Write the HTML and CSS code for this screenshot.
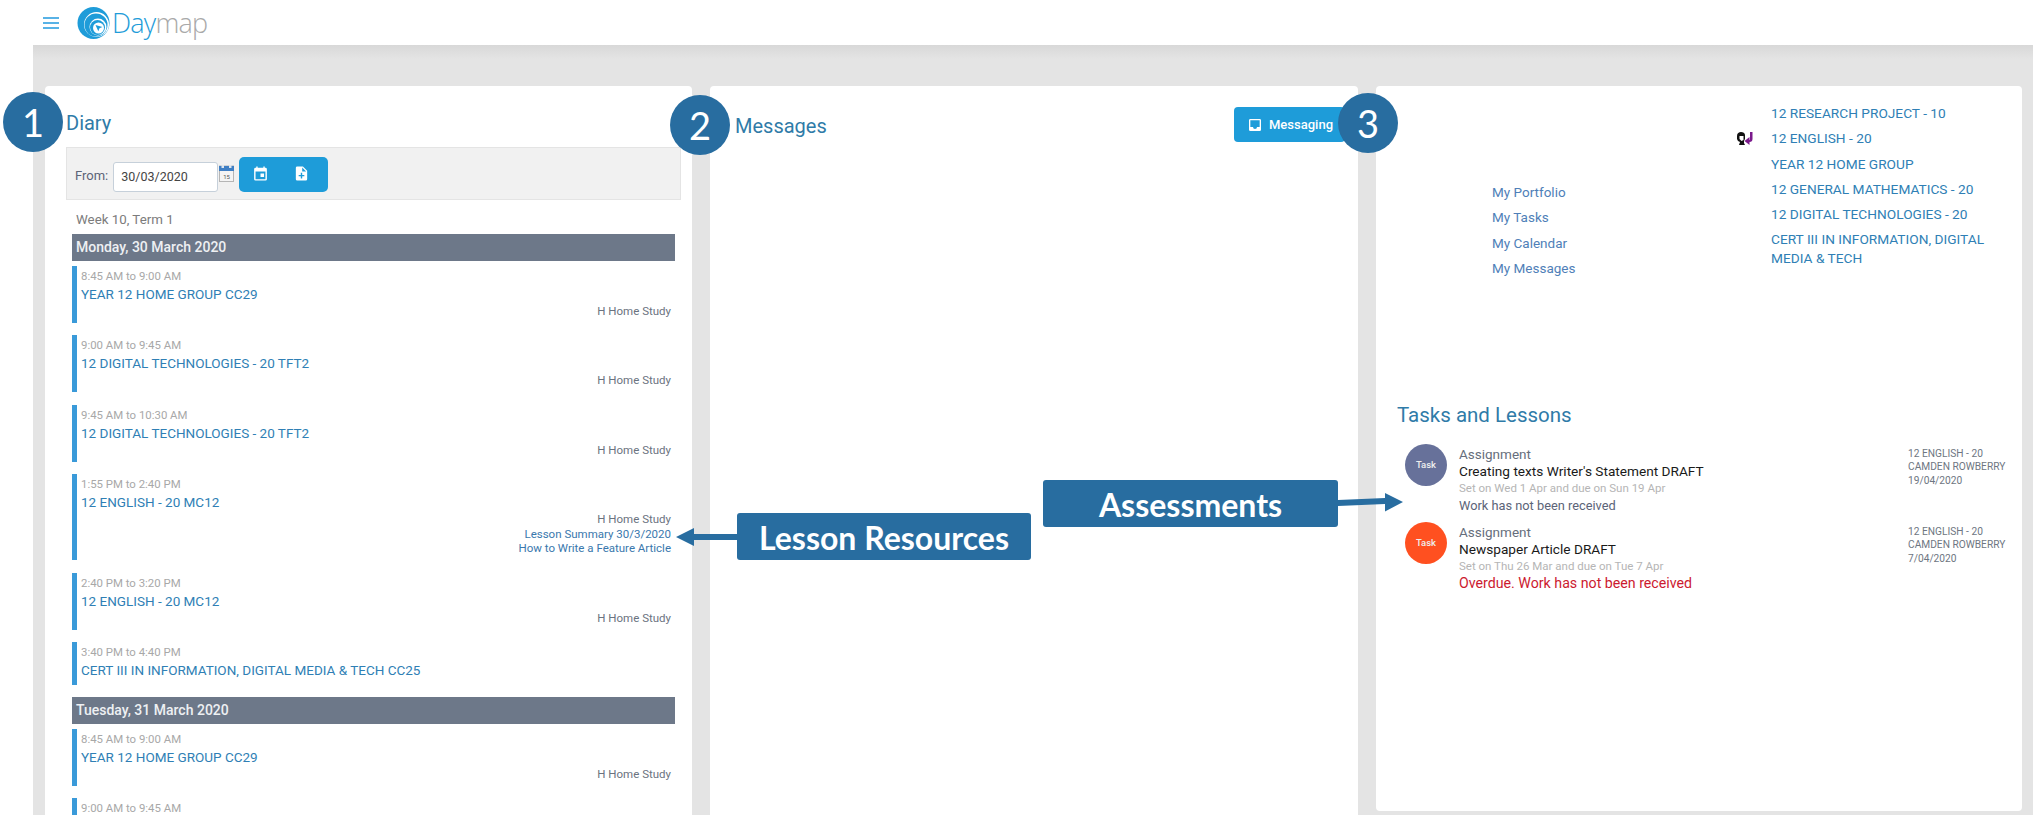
FILE: index.html
```html
<!DOCTYPE html>
<html lang="en">
<head>
  <meta charset="UTF-8" />
  <title>Daymap</title>
  <link rel="stylesheet" href="styles.css">
</head>
<body>
  <header class="topbar">
    <div class="menu-icon"><span></span><span></span><span></span></div>
    <svg class="logo-mark" viewBox="0 0 33 34">
      <circle cx="16.500" cy="17" r="16" fill="#1e9cd9"/>
      <circle cx="19.500" cy="18.500" r="12.500" fill="#fff"/>
      <circle cx="19" cy="19" r="11.500" fill="#1e9cd9"/>
      <circle cx="21" cy="21" r="8.500" fill="#fff"/>
      <circle cx="20.500" cy="21.500" r="7.500" fill="#1e9cd9"/>
      <circle cx="21.500" cy="22" r="5.500" fill="#fff"/>
      <path d="M18.500 19l7 2-3 1.200-1.200 3z" fill="#1e9cd9"/>
    </svg>
    <div class="logo-text"><span class="day">Day</span><span class="map">map</span></div>
  </header>

  <main class="board">
    <section class="card diary">
      <h2 class="card-title diary-title">Diary</h2>
      <div class="toolbar">
        <label class="from-label">From:</label>
        <div class="date-input">30/03/2020</div>
        <svg class="cal-icon" viewBox="0 0 15 17">
          <rect x="0.5" y="1" width="14" height="15.5" fill="#f4f4f4" stroke="#b5b5b5"/>
          <rect x="0" y="1" width="15" height="5" fill="#3f7fc4"/>
          <rect x="2.5" y="0" width="2.5" height="3" fill="#dfe6ee"/>
          <rect x="10" y="0" width="2.5" height="3" fill="#dfe6ee"/>
          <text x="7.5" y="13.5" text-anchor="middle" class="cal-num">15</text>
        </svg>
        <div class="btn-group">
          <svg viewBox="0 0 24 24"><path d="M19 4h-1V2h-2v2H8V2H6v2H5a2 2 0 0 0-2 2v14a2 2 0 0 0 2 2h14a2 2 0 0 0 2-2V6a2 2 0 0 0-2-2zm0 16H5V9h14v11zm-7-8h5v5h-5z" fill="#fff"/></svg>
          <svg viewBox="0 0 24 24"><path d="M14 2H6a2 2 0 0 0-2 2v16a2 2 0 0 0 2 2h12a2 2 0 0 0 2-2V8l-6-6zm2 14h-3v3h-2v-3H8v-2h3v-3h2v3h3v2zm-3-7V3.5L18.500 9H13z" fill="#fff"/></svg>
        </div>
      </div>
      <div class="week">Week 10, Term 1</div>
      <div class="day-bar">Monday, 30 March 2020</div>
      <div class="entry">
        <div class="time">8:45 AM to 9:00 AM</div>
        <a class="subject">YEAR 12 HOME GROUP CC29</a>
        <div class="note">H Home Study</div>
      </div>
      <div class="entry">
        <div class="time">9:00 AM to 9:45 AM</div>
        <a class="subject">12 DIGITAL TECHNOLOGIES - 20 TFT2</a>
        <div class="note">H Home Study</div>
      </div>
      <div class="entry">
        <div class="time">9:45 AM to 10:30 AM</div>
        <a class="subject">12 DIGITAL TECHNOLOGIES - 20 TFT2</a>
        <div class="note">H Home Study</div>
      </div>
      <div class="entry">
        <div class="time">1:55 PM to 2:40 PM</div>
        <a class="subject">12 ENGLISH - 20 MC12</a>
        <div class="note">H Home Study</div>
        <div class="note res">Lesson Summary 30/3/2020</div>
        <div class="note res">How to Write a Feature Article</div>
      </div>
      <div class="entry">
        <div class="time">2:40 PM to 3:20 PM</div>
        <a class="subject">12 ENGLISH - 20 MC12</a>
        <div class="note">H Home Study</div>
      </div>
      <div class="entry">
        <div class="time">3:40 PM to 4:40 PM</div>
        <a class="subject">CERT III IN INFORMATION, DIGITAL MEDIA &amp; TECH CC25</a>
      </div>
      <div class="day-bar">Tuesday, 31 March 2020</div>
      <div class="entry">
        <div class="time">8:45 AM to 9:00 AM</div>
        <a class="subject">YEAR 12 HOME GROUP CC29</a>
        <div class="note">H Home Study</div>
      </div>
      <div class="entry entry-cut">
        <div class="time">9:00 AM to 9:45 AM</div>
      </div>
    </section>

    <section class="card messages">
      <div class="messages-head">
        <h2 class="card-title">Messages</h2>
        <button class="msg-btn">
          <svg viewBox="0 0 24 24"><path d="M19 3H5a2 2 0 0 0-2 2v14a2 2 0 0 0 2 2h14a2 2 0 0 0 2-2V5a2 2 0 0 0-2-2zm0 12h-4a3 3 0 0 1-6 0H5V5h14v10z" fill="#fff"/></svg>
          Messaging
        </button>
      </div>
    </section>

    <section class="card side">
      <div class="side-top">
        <ul class="my-links">
          <li>My Portfolio</li>
          <li>My Tasks</li>
          <li>My Calendar</li>
          <li>My Messages</li>
        </ul>
        <svg class="pupil-icon" viewBox="0 0 17 14">
          <path d="M1 4c0-3 2-4 4-4s4 1 4 3v4l-1 2v2l1 2H3l1-3-2-1-1-2z" fill="#111"/>
          <path d="M3.500 4h4v4l-2 1-2-2z" fill="#fff"/>
          <path d="M14 0h2.500v7c0 2-1 3-3 3v3L8.500 9l5-4v3c.5 0 .5-.5.5-1z" fill="#7b1a8c"/>
        </svg>
        <ul class="courses">
          <li>12 RESEARCH PROJECT - 10</li>
          <li>12 ENGLISH - 20</li>
          <li>YEAR 12 HOME GROUP</li>
          <li>12 GENERAL MATHEMATICS - 20</li>
          <li>12 DIGITAL TECHNOLOGIES - 20</li>
          <li>CERT III IN INFORMATION, DIGITAL MEDIA &amp; TECH</li>
        </ul>
      </div>
      <div class="tasks">
        <h2 class="card-title">Tasks and Lessons</h2>
        <div class="task">
          <div class="task-dot">Task</div>
          <div class="task-body">
            <div class="task-type">Assignment</div>
            <div class="task-name">Creating texts Writer's Statement DRAFT</div>
            <div class="task-dates">Set on Wed 1 Apr and due on Sun 19 Apr</div>
            <div class="task-status">Work has not been received</div>
          </div>
          <div class="task-meta">12 ENGLISH - 20<br>CAMDEN ROWBERRY<br>19/04/2020</div>
        </div>
        <div class="task">
          <div class="task-dot overdue">Task</div>
          <div class="task-body">
            <div class="task-type">Assignment</div>
            <div class="task-name">Newspaper Article DRAFT</div>
            <div class="task-dates">Set on Thu 26 Mar and due on Tue 7 Apr</div>
            <div class="task-status late">Overdue. Work has not been received</div>
          </div>
          <div class="task-meta">12 ENGLISH - 20<br>CAMDEN ROWBERRY<br>7/04/2020</div>
        </div>
      </div>
    </section>
  </main>

  <!-- annotations drawn over the screenshot -->
  <div class="badge badge-1">1</div>
  <div class="badge badge-2">2</div>
  <div class="badge badge-3">3</div>
  <div class="callout callout-lesson">Lesson Resources</div>
  <div class="callout callout-assess">Assessments</div>
  <svg class="arrows" viewBox="0 0 2033 815">
    <path d="M737 534H694V528L676 537L694 546V540H737Z" fill="#286da0"/>
    <path d="M1338 500L1385 498V493L1403 502L1385 511.500V504L1338 506Z" fill="#286da0"/>
  </svg>
</body>
</html>
```

FILE: styles.css
```css
html, body {
  margin: 0;
  height: 815px;
  overflow: hidden;
}

body {
  position: relative;
  background: #fff;
  font-family: 'Roboto', sans-serif;
  color: #5c6478;
}

h2, ul {
  margin: 0;
  padding: 0;
}

ul {
  list-style: none;
}

.topbar {
  display: flex;
  align-items: center;
  height: 45px;
  padding-left: 43px;
}

.menu-icon {
  display: flex;
  flex-direction: column;
  gap: 3px;
  width: 16px;
  margin-right: 18px;
}

.menu-icon span {
  height: 2px;
  background: #58b2e6;
}

.logo-mark {
  width: 33px;
  height: 34px;
  margin-right: 2px;
}

.logo-text {
  font-family: 'Open Sans', sans-serif;
  font-size: 27px;
  font-weight: 300;
  letter-spacing: -0.8px;
}

.logo-text .day { color: #1e9cd9; }
.logo-text .map { color: #a9a9a9; }

.board {
  display: flex;
  gap: 18px;
  align-items: flex-start;
  height: 770px;
  margin-left: 33px;
  padding: 41px 10px 0 12px;
  box-sizing: border-box;
  overflow: hidden;
  background: linear-gradient(#d8d8d8, #e4e4e4 14px);
}

.card {
  flex: none;
  box-sizing: border-box;
  background: #fff;
  border-radius: 4px;
}

.diary {
  width: 647px;
  height: 800px;
}

.messages {
  width: 648px;
  height: 800px;
}

.side {
  width: 646px;
  height: 725px;
}

.card-title {
  font-size: 20px;
  font-weight: 400;
  line-height: 24px;
  color: #2f7ba8;
}

.diary {
  padding: 25px 11px 0 21px;
}

.toolbar {
  display: flex;
  align-items: flex-start;
  height: 53px;
  margin: 12px 0 0;
  padding: 9px 8px 0;
  box-sizing: border-box;
  background: #f1f1f1;
  border: 1px solid #e4e4e4;
}

.from-label {
  margin: 11px 5px 0 0;
  font-size: 13px;
  color: #5c6478;
}

.date-input {
  box-sizing: border-box;
  width: 105px;
  height: 30px;
  margin-top: 5px;
  padding: 6px 7px;
  font-size: 12.500px;
  line-height: 16px;
  color: #444;
  background: #fff;
  border: 1px solid #c6d0da;
  border-radius: 3px;
}

.cal-icon {
  width: 15px;
  height: 17px;
  margin: 8px 5px 0 1px;
}

.cal-num {
  font-family: 'Roboto', sans-serif;
  font-size: 6px;
  fill: #555;
}

.btn-group {
  display: flex;
  gap: 24px;
  box-sizing: border-box;
  width: 89px;
  height: 35px;
  padding: 8px 0 0 13px;
  background: #1e9cd9;
  border-radius: 5px;
}

.btn-group svg {
  width: 17px;
  height: 17px;
}

.week {
  margin: 12px 0 0 10px;
  font-size: 13.300px;
  line-height: 16px;
  color: #7c7c7c;
}

.day-bar {
  margin: 6px 6px 4.500px 6px;
  height: 27px;
  padding-left: 4px;
  font-size: 14px;
  font-weight: 500;
  line-height: 27px;
  color: #eef0f3;
  background: #6d7889;
}

.entry {
  margin: 0 6px 12.500px 6px;
  padding: 2px 4px 4.500px 4px;
  border-left: 5px solid #3a9ad9;
}

.entry-cut {
  margin-bottom: 0;
  padding-top: 3px;
}

.entry-cut .time {
  line-height: 14px;
}

.time {
  font-size: 11.400px;
  line-height: 17px;
  color: #a8a8a8;
}

.subject {
  display: block;
  margin-bottom: 1px;
  font-size: 13.500px;
  line-height: 18px;
  color: #2f7fb5;
}

.note {
  font-size: 11.500px;
  line-height: 14.500px;
  text-align: right;
  color: #6b7380;
}

.note.res {
  color: #3a78ad;
}

.messages {
  padding: 28px 0 0 25px;
}

.messages-head {
  display: flex;
  justify-content: space-between;
  align-items: flex-start;
  padding-right: 13px;
}

.msg-btn {
  display: flex;
  align-items: center;
  gap: 6px;
  width: 111px;
  height: 35px;
  margin-top: -7px;
  padding: 0 0 0 13px;
  font-family: 'Roboto', sans-serif;
  font-size: 13px;
  font-weight: 500;
  color: #fff;
  background: #1e9cd9;
  border: none;
  border-radius: 4px;
}

.msg-btn svg {
  width: 16px;
  height: 16px;
}

.side-top {
  display: flex;
  height: 317px;
  padding: 18px 0 0 116px;
  box-sizing: border-box;
}

.my-links {
  width: 263px;
  padding-top: 79px;
  font-size: 13.500px;
  line-height: 19px;
  color: #4f7fb8;
}

.my-links li, .courses li {
  margin-bottom: 6.300px;
}

.pupil-icon {
  width: 17px;
  height: 14px;
  margin: 28px 18px 0 -19px;
}

.courses {
  width: 230px;
  font-size: 13.700px;
  line-height: 19px;
  color: #2f7fb5;
}

.tasks {
  padding-left: 21px;
}

.tasks .card-title {
  margin-bottom: 17px;
  font-size: 20.500px;
}

.task {
  display: grid;
  grid-template-columns: 42px 449px 1fr;
  column-gap: 12px;
  height: 78px;
  margin-left: 8px;
}

.task-dot {
  width: 42px;
  height: 42px;
  font-size: 9.500px;
  font-weight: 500;
  line-height: 42px;
  text-align: center;
  color: #eee;
  background: #67719a;
  border-radius: 50%;
}

.task-dot.overdue {
  background: #ff5020;
}

.task-body {
  padding-top: 2px;
  font-size: 13.650px;
  line-height: 17px;
}

.task-type {
  font-size: 13.500px;
  color: #666e7c;
}

.task-name {
  color: #1a1a1a;
}

.task-dates {
  font-size: 11.500px;
  color: #b5b5b5;
}

.task-status {
  font-size: 12.800px;
  color: #5c6478;
}

.task-status.late {
  font-size: 14.200px;
  color: #cc1a2f;
}

.task-meta {
  margin-left: -12px;
  padding-top: 2.500px;
  font-size: 10.200px;
  line-height: 13.800px;
  white-space: nowrap;
  color: #6e7682;
}

/* annotation overlays */
.badge {
  position: absolute;
  width: 60px;
  height: 60px;
  font-family: 'Lato', sans-serif;
  font-size: 38px;
  line-height: 60px;
  text-align: center;
  color: #fff;
  background: #286da0;
  border-radius: 50%;
}

.badge-1 { left: 3px; top: 92px; }
.badge-2 { left: 670px; top: 95px; }
.badge-3 { left: 1338px; top: 93px; }

.callout {
  position: absolute;
  height: 47px;
  font-family: 'Lato', sans-serif;
  font-size: 32px;
  font-weight: 700;
  line-height: 49px;
  text-align: center;
  color: #fff;
  background: #286da0;
  border-radius: 3px;
}

.callout-lesson { left: 737px; top: 513px; width: 294px; }
.callout-assess { left: 1043px; top: 480px; width: 295px; }

.arrows {
  position: absolute;
  left: 0;
  top: 0;
  width: 2033px;
  height: 815px;
  pointer-events: none;
}
```
